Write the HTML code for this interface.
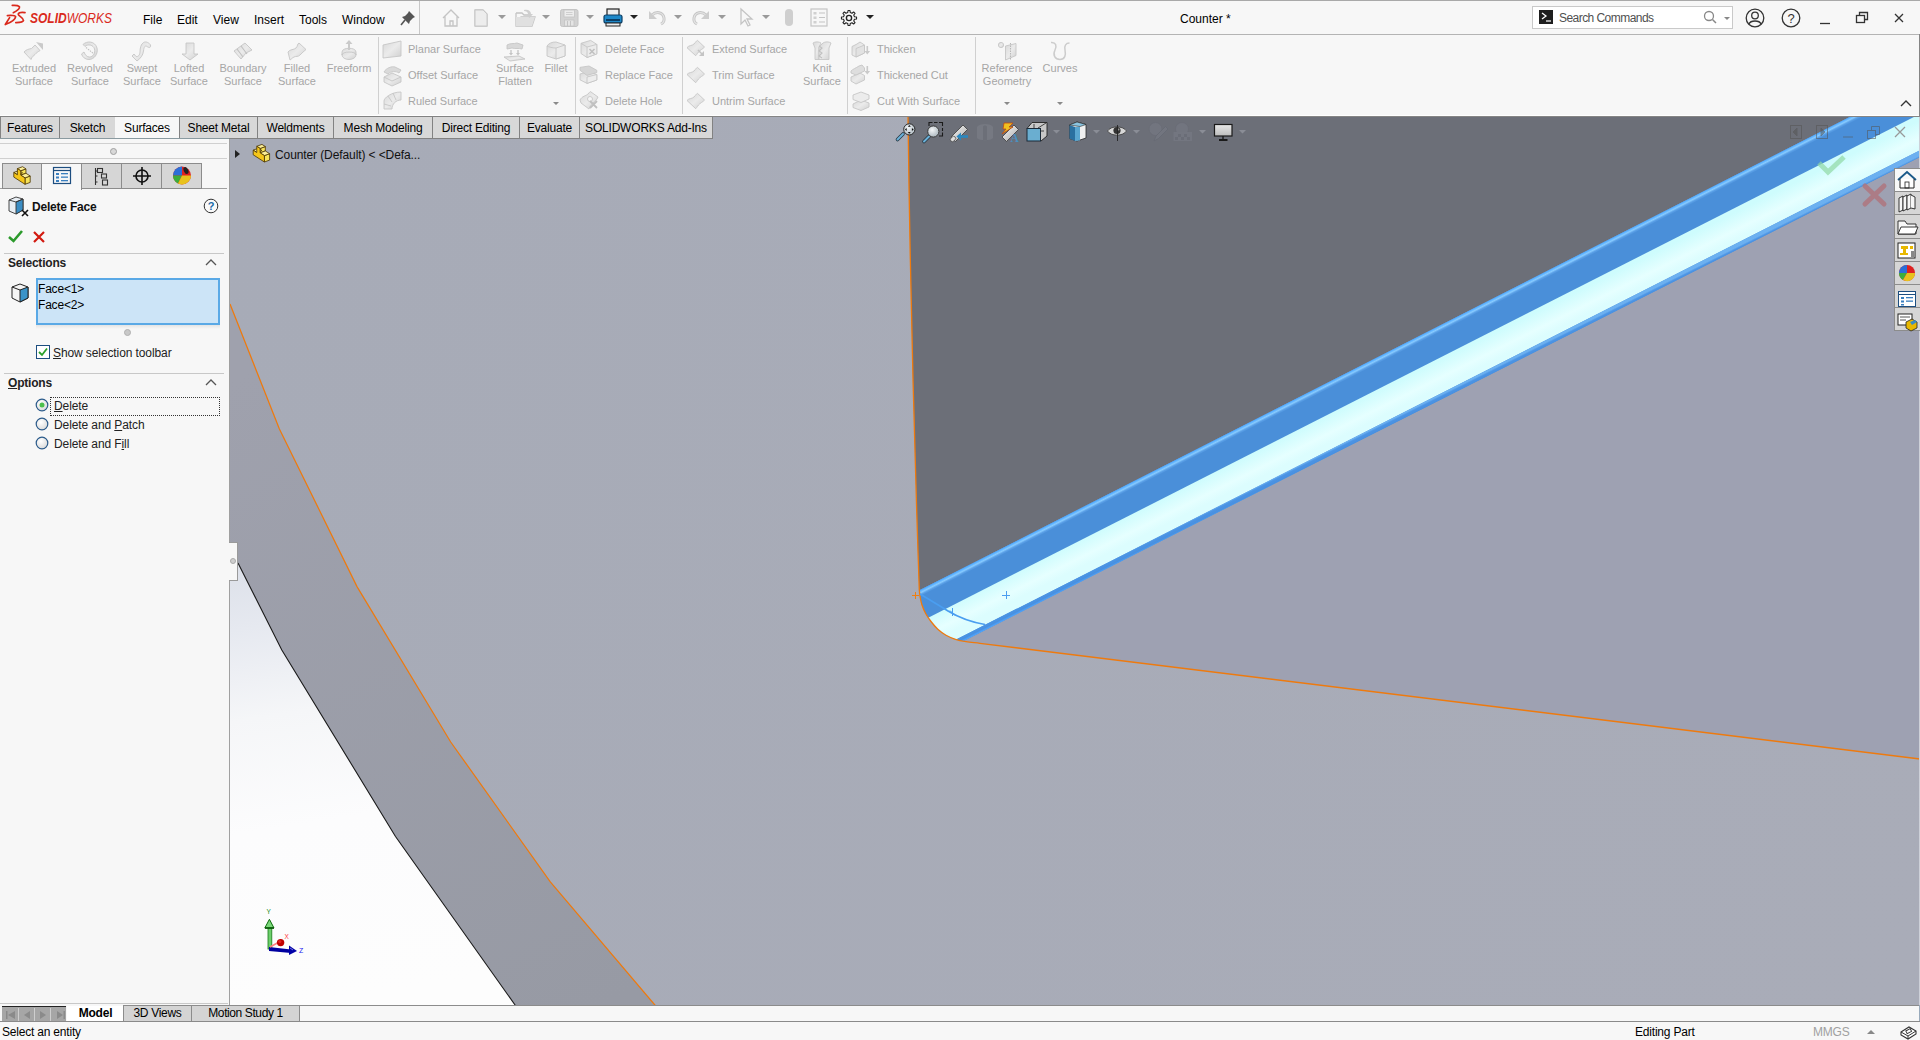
<!DOCTYPE html>
<html><head><meta charset="utf-8">
<style>
*{margin:0;padding:0;box-sizing:border-box}
html,body{width:1920px;height:1040px;overflow:hidden;background:#f7f7f7;font-family:"Liberation Sans",sans-serif;font-size:12px;color:#000}
.a{position:absolute;white-space:nowrap}
#vp{position:absolute;left:230px;top:117px;width:1690px;height:889px;overflow:hidden}
.rt{color:#a6a6a6;font-size:11px;text-align:center;line-height:13px}
.st{color:#a6a6a6;font-size:11px}
.tab{position:absolute;z-index:5;top:116px;height:23px;background:#d8d8d8;border:1px solid #828282;border-right:none;font-size:12px;line-height:23px;letter-spacing:-0.2px;text-align:center;color:#000}
.sep{position:absolute;width:1px;background:#d0d0d0}
</style></head><body>
<!-- top border -->
<div class="a" style="left:0;top:0;width:1920px;height:1px;background:#a9a9a9"></div>
<!-- title bar bottom line -->
<div class="a" style="left:0;top:34px;width:1920px;height:1px;background:#b4b4b4"></div>


<!-- ===== TITLE BAR ===== -->
<svg class="a" style="left:0;top:0" width="116" height="30" viewBox="0 0 116 30">
<g fill="none" stroke="#da291c" stroke-width="1.7" stroke-linecap="round" stroke-linejoin="round">
<path d="M12.3,5.4 C15,5.2 18,5.4 19.4,6.6 C20,8.5 17,11 13.3,12.7"/>
<path d="M7.4,15.6 C11,15.2 15.6,15.4 15.6,16.8 C15.2,19.5 10,22.8 5.3,24.5 L9.6,17.6"/>
<path d="M25,12.6 C22,12.2 18.8,12.6 18.2,14 C18,16 23.5,17.5 23.5,20.5 C23,22.5 19,22.5 15.8,22.6"/>
</g>
<text x="30" y="23" font-family="Liberation Sans" font-weight="bold" font-style="italic" font-size="13.8" fill="#da291c" textLength="82" lengthAdjust="spacingAndGlyphs">SOLID<tspan font-weight="normal">WORKS</tspan></text>
</svg>
<div class="a" style="left:143px;top:13px;font-size:12px">File</div>
<div class="a" style="left:177px;top:13px;font-size:12px">Edit</div>
<div class="a" style="left:213px;top:13px;font-size:12px">View</div>
<div class="a" style="left:254px;top:13px;font-size:12px">Insert</div>
<div class="a" style="left:299px;top:13px;font-size:12px">Tools</div>
<div class="a" style="left:342px;top:13px;font-size:12px">Window</div>
<!-- pin -->
<svg class="a" style="left:400px;top:10px" width="16" height="16" viewBox="0 0 16 16"><path d="M9,1 L15,7 L13,8 L10,11 L9,14 L2,7 L5,6 L8,3 Z" fill="#555"/><path d="M5,10 L1,15" stroke="#555" stroke-width="1.6"/></svg>
<div class="a" style="left:419px;top:1px;width:1px;height:33px;background:#c8c8c8"></div>
<!-- QAT icons -->
<svg class="a" style="left:440px;top:7px" width="450" height="22" viewBox="440 7 450 22">
<g fill="none" stroke="#c4c4c4" stroke-width="1.3">
<path d="M443,18 L451,10 L459,18 M445,16 L445,26 L457,26 L457,16 M450,26 L450,21 L453,21 L453,26"/>
<path d="M475,10 L483,10 L487,14 L487,26 L475,26 Z M483,10 L483,14 L487,14"/>
<path d="M516,13 L516,26 L532,26 L535,17 L521,17 L517,26 M516,13 L522,13 L524,15 L530,15 L530,17"/>



<path d="M741,9 L741,24 L745,20 L748,26 L750,25 L747,19 L752,19 Z"/>
</g>
<rect x="560.5" y="9.5" width="17.5" height="17" rx="2" fill="#d2d2d2" stroke="#c4c4c4"/><rect x="564" y="10" width="10.5" height="7" fill="#ececec" stroke="#c4c4c4" stroke-width="0.8"/><path d="M566,12.5 h6.5 M566,14.5 h6.5" stroke="#c8c8c8" stroke-width="0.8"/><rect x="564.5" y="20" width="9.5" height="6" fill="#e4e4e4" stroke="#c4c4c4" stroke-width="0.8"/><path d="M567.5,21 v5 M570.5,21 v5" stroke="#c4c4c4" stroke-width="1"/>
<path d="M516,17 L535,17 L532,26 L516,26 Z" fill="#e0e0e0"/><path d="M524,10 C528,9 531,11 531,14 L533,14 L529.5,18 L526,14 L528,14 C528,12 526,11 524,11 Z" fill="#cfcfcf"/>
<path d="M475,10 L483,10 L487,14 L487,26 L475,26 Z" fill="#ededed" stroke="#c8c8c8"/>
<g fill="none" stroke="#c6c6c6" stroke-width="3" stroke-linecap="butt"><path d="M652,15 C656,11 663,12 664,18 C664.5,21 663,23 661,24"/><path d="M706,15 C702,11 695,12 694,18 C693.5,21 695,23 697,24"/></g>
<g fill="none" stroke="#e4e4e4" stroke-width="1.2"><path d="M652,15 C656,11 663,12 664,18 C664.5,21 663,23 661,24"/><path d="M706,15 C702,11 695,12 694,18 C693.5,21 695,23 697,24"/></g>
<path d="M649,11 L649,19 L657,19 Z" fill="#cdcdcd"/><path d="M709,11 L709,19 L701,19 Z" fill="#cdcdcd"/>
<g fill="#d0d0d0"><rect x="813.5" y="12" width="3" height="2.5"/><rect x="813.5" y="16.5" width="3" height="2.5"/><rect x="813.5" y="21" width="3" height="2.5"/></g>
<path d="M1186,12" />
<!-- printer -->
<rect x="607" y="9" width="12" height="7" fill="#eee" stroke="#222" stroke-width="1.2"/>
<rect x="604" y="15" width="18" height="8" rx="2" fill="#1e88c8" stroke="#0b3f66" stroke-width="1.2"/>
<rect x="606" y="19" width="14" height="2" fill="#0b3f66"/>
<rect x="606" y="23" width="14" height="3" fill="#eee" stroke="#222" stroke-width="1"/>
<!-- rebuild capsule -->
<rect x="785" y="9" width="8" height="17" rx="4" fill="#cfcfcf"/>
<!-- file props -->
<g fill="none" stroke="#c4c4c4" stroke-width="1.2"><rect x="811" y="9" width="16" height="17"/><path d="M819,13 h6 M819,17.5 h6 M819,22 h6"/></g>
<!-- gear -->
<path d="M854.47,16.78 L856.54,17.01 L856.54,18.99 L854.47,19.22 L853.73,21.00 L855.03,22.63 L853.63,24.03 L852.00,22.73 L850.22,23.47 L849.99,25.54 L848.01,25.54 L847.78,23.47 L846.00,22.73 L844.37,24.03 L842.97,22.63 L844.27,21.00 L843.53,19.22 L841.46,18.99 L841.46,17.01 L843.53,16.78 L844.27,15.00 L842.97,13.37 L844.37,11.97 L846.00,13.27 L847.78,12.53 L848.01,10.46 L849.99,10.46 L850.22,12.53 L852.00,13.27 L853.63,11.97 L855.03,13.37 L853.73,15.00 Z" fill="#fafafa" stroke="#222" stroke-width="1.1" stroke-linejoin="round"/><circle cx="849" cy="18" r="2.6" fill="none" stroke="#222" stroke-width="1.4"/>
<g fill="#9a9a9a"><path d="M498,15 h8 l-4,4z M542,15 h8 l-4,4z M586,15 h8 l-4,4z M674,15 h8 l-4,4z M718,15 h8 l-4,4z M762,15 h8 l-4,4z"/></g>
<g fill="#222"><path d="M630,15 h8 l-4,4z M866,15 h8 l-4,4z"/></g>
</svg>
<div class="a" style="left:1180px;top:12px;font-size:12px">Counter *</div>
<!-- search -->
<div class="a" style="left:1532px;top:6px;width:201px;height:23px;background:#fff;border:1px solid #c9c9c9"></div>
<div class="a" style="left:1539px;top:10px;width:14px;height:14px;background:#1e1e1e"></div>
<svg class="a" style="left:1539px;top:10px" width="14" height="14"><path d="M3,3 L7,6 L3,9" fill="none" stroke="#fff" stroke-width="1.3"/><path d="M7,11 h5" stroke="#fff" stroke-width="1.2"/></svg>
<div class="a" style="left:1559px;top:11px;font-size:12px;color:#505050;letter-spacing:-0.55px">Search Commands</div>
<svg class="a" style="left:1702px;top:9px" width="32" height="18"><circle cx="7" cy="7" r="4.5" fill="none" stroke="#888" stroke-width="1.3"/><path d="M10.5,10.5 L14,14" stroke="#888" stroke-width="1.5"/><path d="M22,8 h6 l-3,3z" fill="#888"/></svg>
<svg class="a" style="left:1744px;top:6px" width="170" height="24">
<g fill="none" stroke="#333" stroke-width="1.3">
<circle cx="11" cy="12" r="8.8"/><circle cx="11" cy="9.5" r="3.3"/><path d="M5,18 C6.5,14 15.5,14 17,18"/>
<circle cx="47" cy="12" r="8.8"/>
<path d="M76,17.5 h10"/>
<rect x="112.5" y="9.5" width="8" height="7"/><path d="M115.5,9.5 V6.5 h8 v7 h-3"/>
<path d="M151,8 L159,16 M159,8 L151,16"/>
</g>
<text x="47" y="16.8" text-anchor="middle" font-family="Liberation Sans" font-size="13" fill="#333">?</text>
</svg>

<!-- ===== RIBBON ===== -->
<div class="a rt" style="left:-6px;top:62px;width:80px">Extruded<br>Surface</div>
<div class="a rt" style="left:50px;top:62px;width:80px">Revolved<br>Surface</div>
<div class="a rt" style="left:102px;top:62px;width:80px">Swept<br>Surface</div>
<div class="a rt" style="left:149px;top:62px;width:80px">Lofted<br>Surface</div>
<div class="a rt" style="left:203px;top:62px;width:80px">Boundary<br>Surface</div>
<div class="a rt" style="left:257px;top:62px;width:80px">Filled<br>Surface</div>
<div class="a rt" style="left:309px;top:62px;width:80px">Freeform</div>
<div class="a rt" style="left:475px;top:62px;width:80px">Surface<br>Flatten</div>
<div class="a rt" style="left:516px;top:62px;width:80px">Fillet</div>
<div class="a rt" style="left:782px;top:62px;width:80px">Knit<br>Surface</div>
<div class="a rt" style="left:967px;top:62px;width:80px">Reference<br>Geometry</div>
<div class="a rt" style="left:1020px;top:62px;width:80px">Curves</div>
<div class="a st" style="left:408px;top:43px;line-height:13px">Planar Surface</div>
<div class="a st" style="left:408px;top:69px;line-height:13px">Offset Surface</div>
<div class="a st" style="left:408px;top:95px;line-height:13px">Ruled Surface</div>
<div class="a st" style="left:605px;top:43px;line-height:13px">Delete Face</div>
<div class="a st" style="left:605px;top:69px;line-height:13px">Replace Face</div>
<div class="a st" style="left:605px;top:95px;line-height:13px">Delete Hole</div>
<div class="a st" style="left:712px;top:43px;line-height:13px">Extend Surface</div>
<div class="a st" style="left:712px;top:69px;line-height:13px">Trim Surface</div>
<div class="a st" style="left:712px;top:95px;line-height:13px">Untrim Surface</div>
<div class="a st" style="left:877px;top:43px;line-height:13px">Thicken</div>
<div class="a st" style="left:877px;top:69px;line-height:13px">Thickened Cut</div>
<div class="a st" style="left:877px;top:95px;line-height:13px">Cut With Surface</div>
<div class="sep" style="left:378px;top:37px;height:77px"></div>
<div class="sep" style="left:575px;top:37px;height:77px"></div>
<div class="sep" style="left:682px;top:37px;height:77px"></div>
<div class="sep" style="left:847px;top:37px;height:77px"></div>
<div class="sep" style="left:975px;top:37px;height:77px"></div>
<svg class="a" style="left:0;top:34px" width="1920" height="82" viewBox="0 34 1920 82">
<g fill="#8a8a8a"><path d="M553,102 h6 l-3,3z M1004,102 h6 l-3,3z M1057,102 h6 l-3,3z"/></g>
<path d="M1901,106 L1906,101 L1911,106" fill="none" stroke="#333" stroke-width="1.4"/>
<!-- ribbon icons (disabled, grey) -->
<defs><linearGradient id="gi" x1="0" y1="0" x2="1" y2="1"><stop offset="0" stop-color="#d8d8d8"/><stop offset="0.5" stop-color="#ebebeb"/><stop offset="1" stop-color="#d0d0d0"/></linearGradient></defs>
<g fill="url(#gi)" stroke="#c6c6c6" stroke-width="0.9" stroke-linejoin="round">
<!-- extruded -->
<path d="M24,52 C26,49.5 29,49 31.5,48.5 L35,45 L40,50.5 C38,52 36.5,52.5 35,54.5 C33.5,56 32,56.5 31,59.5 Z"/>
<!-- revolved -->
<path d="M83,44.5 C87,40.5 95,41 97,48 C98.5,54 94,59.5 89,59.5 C85,59.5 82.5,57 81.5,54 L84,52 C85,55 87,57 89.5,57 C93,57 95.5,53 94.5,49 C93.5,45 88,43.5 85,46.5 Z"/>
<!-- swept -->
<path d="M132,56 L137,61 C141,58 143,55 143.5,51 C144,47 145,45 147,46.5 C149,48 151,48 150.5,45 C149.5,43 146,41 143.5,42.5 C141,44 140,48 140,52 C140,55 138,57 136,56.5 L134,54 Z"/>
<!-- lofted -->
<path d="M186,43 L194,43 L194,54 L198,54 L190,60 L182,54 L186,54 Z"/>
<!-- boundary -->
<path d="M234,51 L245,43 L252,50 L246,53 L241,59 Z"/>
<!-- filled -->
<path d="M288,52 C290,49 294,50 296,48 C298,46 297,44 299,43 L306,49.5 C304,51 302,53 300,55 C298,57 296,56 294,57 C292,58 291,59.5 290,60 Z"/>
<!-- freeform -->
<ellipse cx="349" cy="55" rx="7" ry="4.5"/><path d="M342,52 C342,47 356,47 356,52 L356,55 C356,51 342,51 342,55 Z"/>
<!-- planar -->
<path d="M383,45 L401,41 L401,56 L383,58 Z"/>
<!-- offset -->
<path d="M384,77 L392,73 L401,77 L401,82 L392,86 L384,82 Z"/>
<path d="M384,77 L392,81 L401,77" fill="none"/>
<path d="M384,72 C386,68 392,66 395,67 L401,70 L399,73 C396,71 391,71 388,74 Z" fill="#dadada"/>
<!-- ruled -->
<path d="M384,101 L384,109 L392,109 C392,104 396,100 401,100 L401,92 C391,92 384,98 384,101 Z"/>
<path d="M388,96 L392,102 M393,93 L396,100 M384,104 L391,106" fill="none"/>
<!-- surface flatten -->
<path d="M507,45 C510,43 514,44 517,43 L523,45 L522,49 C519,48 515,49 512,48 L507,49 Z" fill="#d8d8d8"/>
<path d="M504,57 L519,56 L525,59 L510,61 Z"/>
<path d="M511,50 v4 M518,50 v4" fill="none" stroke="#c4c4c4" stroke-width="1.3"/>
<path d="M509,53 h4 l-2,2.5z M516,53 h4 l-2,2.5z" fill="#c4c4c4" stroke="none"/>
<!-- fillet -->
<path d="M547,46 C549,43 552,42 556,42 L565,45 L565,56 L556,59 L547,56 Z"/>
<path d="M556,48 L565,45 L565,56 L556,59 Z" fill="#ececec"/>
<path d="M547,46 C549,47 552,48 556,48" fill="none"/>
<!-- delete face -->
<path d="M581,43.3 L590.6,40.4 L596.8,44.4 L596.8,53.9 L587,57.5 L581,53.5 Z"/>
<path d="M587,47 L596.8,44.4 L596.8,53.9 L587,57.5 Z" fill="#ececec"/>
<path d="M581,43.3 L587,47" fill="none"/>
<!-- replace face -->
<path d="M580,74 L589,71.5 L596.8,74.5 L596.8,80 L587,83.4 L580,79.8 Z"/>
<path d="M587,77 L596.8,74.5 L596.8,80 L587,83.4 Z" fill="#ededed"/>
<path d="M580,67.4 L589,66 L596.8,70.3 L596.8,72.5 L587,75.4 L580,70.3 Z" fill="#d6d6d6"/>
<!-- delete hole -->
<path d="M580,100 C582,96 586,96 588,94 C590,92 590,91 591,92 L598,97 C597,100 595,101 593,103 C591,105 590,106 589,109 L581,103 Z"/>
<circle cx="590" cy="99" r="2.5" fill="#f6f6f6"/>
<!-- extend/trim/untrim -->
<path d="M687,47.7 C689,45 692,46 694,44 C696,42 696,41 697.5,40.4 L704.5,47 C703,49 700,50 698.5,52 C697,54 696.5,55 695.7,55.7 Z"/>
<path d="M687,74.5 C689,72 692,73 694,71 C696,69 696,68 697.5,67.4 L704.5,74 C703,76 700,77 698.5,79 C697,81 696.5,82 695.7,82.7 Z"/>
<path d="M687,100.5 C689,98 692,99 694,97 C696,95 696,94 697.5,93.4 L704.5,100 C703,102 700,103 698.5,105 C697,107 696.5,108 695.7,108.7 Z"/>
<!-- knit -->
<path d="M813,43 C815,41.5 819,41.5 821,43 L819,47 L819,59.5 L815,59.5 L815,48 Z"/>
<path d="M823,43 C825,41.5 829,41.5 831,43 L829,48 L829,59.5 L819,59.5 L819,47 Z"/>
<!-- thicken group -->
<path d="M852,46.5 L857,44 L860,42 L864.5,45 L864.5,53 L856,57 L852,55 Z"/>
<path d="M856,48.5 L864.5,45 L864.5,53 L856,57 Z" fill="#e2e2e2"/>
<path d="M851,77 L860,73 L864.5,75.5 L864.5,80 L856,84 L851,81 Z"/>
<path d="M851,71 C853,69 856,68 859,66 L862,65 L864.5,68 L864.5,71 L856,75 L851,73 Z" fill="#dedede"/>
<path d="M853,104 L861,100 L869,103 L869,107 L861,110.5 L853,107.5 Z"/>
<path d="M853,95 L861,92 L869,95 L869,99 L861,102.5 L853,99.5 Z" fill="#ececec"/>
<!-- ref geom -->
<path d="M1005.5,46 L1016,43.5 L1016,55.5 L1005.5,60 Z"/><circle cx="1001" cy="45" r="2.6"/>
</g>
<g fill="#cacaca"><path d="M36,42 L43,43.5 L43,50 Z"/><path d="M348,50 L350,50 L350,44 L352.5,44 L349,40 L345.5,44 L348,44 Z"/><path d="M866.5,46 h1.6 v5 h2 l-2.8,3.5 l-2.8,-3.5 h2z M866.5,66 h1.6 v5 h2 l-2.8,3.5 l-2.8,-3.5 h2z"/></g>
<path d="M1051,42.5 C1056,42 1057,46 1055,50 C1052.5,55 1055,59.5 1060,59.5 C1065,59.5 1066,55 1065,50 C1064,45.5 1066,43 1069.5,43" fill="none" stroke="#cccccc" stroke-width="1.5"/>
<path d="M698,50 L702,54" stroke="#c4c4c4" stroke-width="1.6"/><path d="M704,51 L704,56 L699,56 Z" fill="#c4c4c4"/>
<g fill="none" stroke="#c0c0c0" stroke-width="1.1"><path d="M86,47.5 L94,54" stroke-dasharray="1.5 1"/><path d="M589.5,49 L594.5,54 M594.5,49 L589.5,54" stroke-width="1.6"/><path d="M590,101 L597,108 M597,101 L590,108" stroke-width="1.8"/><path d="M819,46 L822,48 L819,51 L822,53 L819,56 L822,58" /><path d="M237,49 L243,57 M241,46 L247,54"/><path d="M1010.5,43 V60" stroke="#b8b8b8" stroke-dasharray="1.5 1"/></g>
</svg>

<div class="a" style="left:0;top:115px;width:1920px;height:1px;background:#ffffff"></div>
<div class="a" style="left:0;top:116px;width:1920px;height:1px;background:#858585"></div>
<div class="a" style="left:1919px;top:34px;width:1px;height:83px;background:#858585"></div>
<div class="a" style="left:1919px;top:117px;width:1px;height:888px;background:#cdd0d8;z-index:3"></div>
<!-- ===== COMMAND MANAGER TABS ===== -->
<div class="tab" style="left:0px;width:60px;border-right:1px solid #828282">Features</div>
<div class="tab" style="left:59px;width:57px;border-right:1px solid #828282">Sketch</div>
<div class="a" style="left:115px;top:117px;width:64px;height:22px;z-index:5;background:#f7f7f7;text-align:center;line-height:22px;font-size:12px;letter-spacing:-0.2px">Surfaces</div>
<div class="tab" style="left:179px;width:79px;border-right:1px solid #828282">Sheet Metal</div>
<div class="tab" style="left:257px;width:77px;border-right:1px solid #828282">Weldments</div>
<div class="tab" style="left:333px;width:100px;border-right:1px solid #828282">Mesh Modeling</div>
<div class="tab" style="left:432px;width:88px;border-right:1px solid #828282">Direct Editing</div>
<div class="tab" style="left:519px;width:61px;border-right:1px solid #828282">Evaluate</div>
<div class="tab" style="left:579px;width:134px;border-right:1px solid #828282">SOLIDWORKS Add-Ins</div>
<div class="a" style="left:0;top:138px;width:229px;height:1px;background:#8a9aa0;z-index:5"></div>

<!-- ===== LEFT PANEL ===== -->
<div class="a" style="left:229px;top:139px;width:1px;height:866px;background:#a0a0a0"></div>
<div class="a" style="left:0;top:143px;width:227px;height:1px;background:#d0d0d0"></div>
<div class="a" style="left:110px;top:148px;width:7px;height:7px;border-radius:50%;border:1px solid #a0a0a0;background:#d8d8d8"></div>
<div class="a" style="left:0;top:158px;width:227px;height:1px;background:#d0d0d0"></div>
<!-- PM tabs -->
<div class="a" style="left:0;top:188px;width:227px;height:1px;background:#a0a0a0"></div>
<div class="a" style="left:2px;top:163px;width:40px;height:26px;background:#d6d6d6;border:1px solid #8c8c8c"></div>
<div class="a" style="left:41px;top:163px;width:41px;height:27px;background:#f7f7f7;border:1px solid #8c8c8c;border-bottom:none"></div>
<div class="a" style="left:81px;top:163px;width:41px;height:26px;background:#d6d6d6;border:1px solid #8c8c8c"></div>
<div class="a" style="left:121px;top:163px;width:41px;height:26px;background:#d6d6d6;border:1px solid #8c8c8c"></div>
<div class="a" style="left:161px;top:163px;width:41px;height:26px;background:#d6d6d6;border:1px solid #8c8c8c"></div>
<svg class="a" style="left:0;top:160px" width="230" height="30" viewBox="0 160 230 30">
<!-- part icon -->
<g stroke="#4a3400" stroke-width="0.8" stroke-linejoin="round"><path d="M25.00,184.30 L30.20,182.40 L30.20,176.00 L25.00,177.90 Z" fill="#f7e35a"/><path d="M20.74,175.16 L25.94,173.26 L25.94,168.86 L20.74,170.76 Z" fill="#f7e35a"/><path d="M13.80,172.45 L17.38,174.75 L22.58,172.85 L19.00,170.55 Z" fill="#fbee98"/><path d="M17.38,168.60 L20.74,170.76 L25.94,168.86 L22.58,166.70 Z" fill="#fbee98"/><path d="M20.74,175.16 L25.00,177.90 L30.20,176.00 L25.94,173.26 Z" fill="#fbee98"/><path d="M13.80,177.10 L25.00,184.30 L25.00,177.90 L20.74,175.16 L20.74,170.76 L17.38,168.60 L17.38,174.75 L13.80,172.45 Z" fill="#f5c61a"/></g>
<!-- property manager icon -->
<g fill="none" stroke="#1d4e80" stroke-width="1.2"><rect x="53.5" y="167.5" width="17" height="16"/><path d="M53.5,170.5 h17"/></g>
<g fill="#3a7fbf"><rect x="56" y="173" width="3" height="2"/><rect x="56" y="176.5" width="3" height="2"/><rect x="56" y="180" width="3" height="2"/><rect x="61" y="173" width="7" height="1.3"/><rect x="61" y="176.5" width="7" height="1.3"/><rect x="61" y="180" width="7" height="1.3"/></g>
<!-- config manager icon -->
<g fill="none" stroke="#333" stroke-width="1.1"><path d="M95.5,168 V185 M95.5,171 h2 M95.5,182 h2 M95.5,176 h2"/><rect x="97.5" y="168.5" width="5" height="4"/><rect x="101.5" y="174" width="5" height="4"/><rect x="102.5" y="180" width="5" height="5"/></g>
<!-- dimxpert icon -->
<g fill="none" stroke="#111" stroke-width="1.6"><circle cx="142" cy="176" r="6"/><path d="M142,167 V185 M133,176 H151"/></g>
<!-- appearance ball -->
<circle cx="182" cy="175.5" r="9" fill="#d22"/>
<path d="M182,175.5 L173,175.5 A9,9 0 0 1 182,166.5 Z" fill="#2c6fd8"/>
<path d="M182,175.5 L173,175.5 A9,9 0 0 0 178,183.5 Z" fill="#3cae3c"/>
<path d="M182,175.5 L191,175.5 A9,9 0 0 1 178,183.5 Z" fill="#e8c21c"/>
<ellipse cx="186" cy="170.5" rx="2.2" ry="3.6" fill="#222" transform="rotate(-25 186 170.5)"/>
</svg>
<!-- Delete Face header -->
<svg class="a" style="left:6px;top:195px" width="24" height="22" viewBox="0 0 24 22">
<path d="M3,5 L10,2 L17,4 L17,15 L10,19 L3,16 Z" fill="#e8eef4" stroke="#333" stroke-width="0.9"/>
<path d="M10,7 L17,4 L17,15 L10,19 Z" fill="#3b8dc4" stroke="#333" stroke-width="0.9"/>
<path d="M3,5 L10,7 L17,4" fill="none" stroke="#333" stroke-width="0.9"/>
<path d="M16,15 L22,21 M22,15 L16,21" stroke="#111" stroke-width="1.6"/>
</svg>
<div class="a" style="left:32px;top:200px;font-size:12px;font-weight:bold;letter-spacing:-0.2px;color:#111">Delete Face</div>
<svg class="a" style="left:202px;top:197px" width="18" height="18"><circle cx="9" cy="9" r="6.8" fill="#fafafa" stroke="#333" stroke-width="1"/><text x="9" y="13.2" text-anchor="middle" font-family="Liberation Sans" font-weight="bold" font-size="11" fill="#1a6aa8">?</text></svg>
<svg class="a" style="left:6px;top:227px" width="44" height="18">
<path d="M3,10 L7.5,14 L16,4" fill="none" stroke="#2c9a2c" stroke-width="2.6"/>
<path d="M28,5 L38,15 M38,5 L28,15" stroke="#d21a10" stroke-width="2.2"/>
</svg>
<!-- Selections -->
<div class="a" style="left:4px;top:253px;width:220px;height:1px;background:#c8c8c8"></div>
<div class="a" style="left:8px;top:256px;font-size:12px;font-weight:bold;color:#222;letter-spacing:-0.2px">Selections</div>
<svg class="a" style="left:204px;top:257px" width="14" height="10"><path d="M2,8 L7,3 L12,8" fill="none" stroke="#555" stroke-width="1.3"/></svg>
<svg class="a" style="left:10px;top:282px" width="20" height="22" viewBox="0 0 20 22">
<path d="M2,5 L10,2 L18,5 L18,16 L10,20 L2,16 Z" fill="#f4f4f4" stroke="#222" stroke-width="1"/>
<path d="M10,8 L18,5 L18,16 L10,20 Z" fill="#3a93c8" stroke="#222" stroke-width="1"/>
<path d="M2,5 L10,8" fill="none" stroke="#222" stroke-width="1"/>
</svg>
<div class="a" style="left:36px;top:278px;width:184px;height:47px;background:#cce4f7;border:2px solid #5aa9e6"></div>
<div class="a" style="left:38px;top:281px;font-size:12px;line-height:16px;letter-spacing:-0.2px">Face&lt;1&gt;<br>Face&lt;2&gt;</div>
<div class="a" style="left:36px;top:325px;width:184px;height:4px;background:linear-gradient(#e4e4e4,#f7f7f7)"></div>
<div class="a" style="left:124px;top:329px;width:7px;height:7px;border-radius:50%;background:#c8c8c8;border:1px solid #b0b0b0"></div>
<div class="a" style="left:36px;top:345px;width:14px;height:14px;border:1px solid #1d4e80;background:#fff"></div>
<svg class="a" style="left:36px;top:345px" width="14" height="14"><path d="M3,7 L6,10 L11,3.5" fill="none" stroke="#2aa02a" stroke-width="1.8"/></svg>
<div class="a" style="left:53px;top:346px;font-size:12px;color:#222;letter-spacing:-0.1px"><u>S</u>how selection toolbar</div>
<!-- Options -->
<div class="a" style="left:4px;top:373px;width:220px;height:1px;background:#c8c8c8"></div>
<div class="a" style="left:8px;top:376px;font-size:12px;font-weight:bold;color:#222;letter-spacing:-0.2px"><u>O</u>ptions</div>
<svg class="a" style="left:204px;top:377px" width="14" height="10"><path d="M2,8 L7,3 L12,8" fill="none" stroke="#555" stroke-width="1.3"/></svg>
<svg class="a" style="left:34px;top:396px" width="18" height="56">
<defs><radialGradient id="rg" cx="0.4" cy="0.35" r="0.7"><stop offset="0" stop-color="#fff"/><stop offset="1" stop-color="#d8d8d8"/></radialGradient></defs>
<circle cx="8" cy="9" r="5.8" fill="url(#rg)" stroke="#2a5a8a" stroke-width="1.2"/>
<circle cx="8" cy="9" r="2.5" fill="#4cbf4c"/>
<circle cx="8" cy="28" r="5.8" fill="url(#rg)" stroke="#2a5a8a" stroke-width="1.2"/>
<circle cx="8" cy="47" r="5.8" fill="url(#rg)" stroke="#2a5a8a" stroke-width="1.2"/>
</svg>
<div class="a" style="left:50px;top:397px;width:170px;height:19px;border:1px dotted #333"></div>
<div class="a" style="left:54px;top:399px;font-size:12px;color:#222;letter-spacing:-0.1px"><u>D</u>elete</div>
<div class="a" style="left:54px;top:418px;font-size:12px;color:#222;letter-spacing:-0.1px">Delete and <u>P</u>atch</div>
<div class="a" style="left:54px;top:437px;font-size:12px;color:#222;letter-spacing:-0.1px">Delete and F<u>i</u>ll</div>
<!-- panel bottom -->
<div class="a" style="left:0;top:1003px;width:228px;height:1px;background:#c8c8c8"></div>

<!-- VIEWPORT -->
<div id="vp">
<svg width="1690" height="889" viewBox="230 117 1690 889">
<defs>
<linearGradient id="gBg" gradientUnits="userSpaceOnUse" x1="230" y1="117" x2="1920" y2="1006">
<stop offset="0" stop-color="#a7abb7"/><stop offset="1" stop-color="#a9acb8"/>
</linearGradient>
<linearGradient id="gWhite" gradientUnits="userSpaceOnUse" x1="230" y1="563" x2="300" y2="1006">
<stop offset="0" stop-color="#dce0e9"/><stop offset="0.15" stop-color="#e6e9f0"/><stop offset="0.35" stop-color="#f5f6f8"/><stop offset="0.6" stop-color="#fcfcfd"/><stop offset="1" stop-color="#fdfdfd"/>
</linearGradient>
<linearGradient id="gTopRim" gradientUnits="userSpaceOnUse" x1="1100" y1="498.4" x2="1102.8" y2="503.9">
<stop offset="0" stop-color="#4aa6ff"/><stop offset="0.2" stop-color="#64b6ff"/><stop offset="0.42" stop-color="#88cbff"/><stop offset="0.7" stop-color="#5a9fe6"/><stop offset="1" stop-color="#4a90da"/>
</linearGradient>
<linearGradient id="gBotRim" gradientUnits="userSpaceOnUse" x1="1160" y1="535.3" x2="1162.8" y2="540.9">
<stop offset="0" stop-color="#6cb0f0"/><stop offset="0.25" stop-color="#4c94e4"/><stop offset="0.7" stop-color="#4890e0"/><stop offset="1" stop-color="#4ea4fc"/>
</linearGradient>
<linearGradient id="gCyan" gradientUnits="userSpaceOnUse" x1="1100" y1="530" x2="1111" y2="552">
<stop offset="0" stop-color="#cefcfd"/><stop offset="0.65" stop-color="#e6ffff"/><stop offset="1" stop-color="#dcfdfe"/>
</linearGradient>
<linearGradient id="gBand" gradientUnits="userSpaceOnUse" x1="300" y1="350" x2="600" y2="1006"><stop offset="0" stop-color="#9fa1ad"/><stop offset="1" stop-color="#979aa4"/></linearGradient>
<clipPath id="cFace"><path d="M908,117 Q911,350 919.3,590 C919.55,592.67 919.55,593.50 920,596 C920.45,598.50 921.03,602.03 922,605 C922.97,607.97 924.30,611.05 925.8,613.8 C927.30,616.55 929.00,618.93 931,621.5 C933.00,624.07 935.30,626.92 937.8,629.2 C940.30,631.48 943.05,633.52 946,635.2 C948.95,636.88 952.17,638.23 955.5,639.3 C958.83,640.37 961.92,640.93 966,641.6 C970.08,642.27 974.33,642.60 980,643.3 L1920,759 L1920,117 Z"/></clipPath>
</defs>
<rect x="230" y="117" width="1690" height="889" fill="url(#gBg)"/>
<!-- left darker band -->
<path d="M230,304 L279.4,429 L357,586.6 L450.7,742 L550.3,881.9 L655.7,1006 L230,1006 Z" fill="url(#gBand)"/>
<!-- white region -->
<path d="M230,563 L238,563 L281.8,650 L395.5,836.5 L515.8,1006 L230,1006 Z" fill="url(#gWhite)"/>
<path d="M238,563 L281.8,650 L395.5,836.5 L515.8,1006" fill="none" stroke="#1a1a1a" stroke-width="1.1"/>
<path d="M230,304 L279.4,429 L357,586.6 L450.7,742 L550.3,881.9 L655.7,1006" fill="none" stroke="#ee7a0e" stroke-width="1.25"/>
<g clip-path="url(#cFace)">
<rect x="850" y="117" width="1070" height="889" fill="#9ea1b2"/>
<!-- dark face: above L_top -->
<path d="M850,117 L1920,117 L1920,81.25 L850,625.6 Z" fill="#6c6f78"/>
<!-- strip base blue L_top..L_ob -->
<path d="M850,625.6 L1920,81.25 L1920,157.1 L850,698.5 Z" fill="#4a8fd9"/>
<!-- top rim -->
<path d="M850,625.6 L1920,81.25 L1920,87.5 L850,631.9 Z" fill="url(#gTopRim)"/>
<!-- cyan L_bc..L_cb -->
<path d="M850,657.4 L1920,113.9 L1920,150.2 L850,693.4 Z" fill="url(#gCyan)"/>
<!-- bottom rim L_cb..L_ob -->
<path d="M850,693.4 L1920,150.2 L1920,157.1 L850,698.5 Z" fill="url(#gBotRim)"/>
</g>
<!-- orange outline right -->
<path d="M908,117 Q911,350 919.3,590 C919.55,592.67 919.55,593.50 920,596 C920.45,598.50 921.03,602.03 922,605 C922.97,607.97 924.30,611.05 925.8,613.8 C927.30,616.55 929.00,618.93 931,621.5 C933.00,624.07 935.30,626.92 937.8,629.2 C940.30,631.48 943.05,633.52 946,635.2 C948.95,636.88 952.17,638.23 955.5,639.3 C958.83,640.37 961.92,640.93 966,641.6 C970.08,642.27 974.33,642.60 980,643.3 L1920,759" fill="none" stroke="#ee7a0e" stroke-width="1.3"/>
</svg>
</div>

<!-- ===== VIEWPORT OVERLAYS ===== -->
<svg class="a" style="left:230px;top:117px" width="1690" height="889" viewBox="230 117 1690 889">
<!-- tree -->
<path d="M235,150 L240,154 L235,158 Z" fill="#222"/>
<g stroke="#4a3400" stroke-width="0.8" stroke-linejoin="round"><path d="M264.40,162.00 L269.60,160.10 L269.60,153.70 L264.40,155.60 Z" fill="#f7e35a"/><path d="M260.14,152.86 L265.34,150.96 L265.34,146.56 L260.14,148.46 Z" fill="#f7e35a"/><path d="M253.20,150.15 L256.78,152.45 L261.98,150.55 L258.40,148.25 Z" fill="#fbee98"/><path d="M256.78,146.30 L260.14,148.46 L265.34,146.56 L261.98,144.40 Z" fill="#fbee98"/><path d="M260.14,152.86 L264.40,155.60 L269.60,153.70 L265.34,150.96 Z" fill="#fbee98"/><path d="M253.20,154.80 L264.40,162.00 L264.40,155.60 L260.14,152.86 L260.14,148.46 L256.78,146.30 L256.78,152.45 L253.20,150.15 Z" fill="#f5c61a"/></g>
<!-- markers -->
<path d="M912,595.5 h7 M915.5,592 v7" stroke="#f07f10" stroke-width="1"/>
<path d="M1002,595.5 h8 M1006.5,591 v8" stroke="#4a9ef0" stroke-width="1"/>
<path d="M920,594 C930,600 940,606 948,611 C958,617 970,622 985,624.5" fill="none" stroke="#4a9ef0" stroke-width="1.6"/>
<path d="M950,610.5 L955,615.5 M952.5,608 v8" stroke="#4a9ef0" stroke-width="1"/>
<!-- heads-up toolbar -->
<defs>
<radialGradient id="gLens" cx="0.4" cy="0.35" r="0.7"><stop offset="0" stop-color="#f4f6f8"/><stop offset="1" stop-color="#a8b4bc"/></radialGradient>
<linearGradient id="gTel" x1="0" y1="0" x2="1" y2="1"><stop offset="0" stop-color="#fafafa"/><stop offset="1" stop-color="#a8a8a8"/></linearGradient>
<linearGradient id="gMon" x1="0" y1="0" x2="0" y2="1"><stop offset="0" stop-color="#e8e8e8"/><stop offset="1" stop-color="#bcbcbc"/></linearGradient>
</defs>
<g>
<!-- zoom to fit -->
<path d="M903,134 L897.5,139.5" stroke="#2a3a44" stroke-width="3.6" stroke-linecap="round"/><path d="M903,134 L897.5,139.5" stroke="#6ab0d8" stroke-width="2" stroke-linecap="round"/>
<circle cx="909.3" cy="129.4" r="5.6" fill="url(#gLens)" stroke="#2a2a2a" stroke-width="1"/>
<path d="M909.3,125 l-1.5,1.8 h3z M909.3,133.8 l-1.5,-1.8 h3z M904.9,129.4 l1.8,-1.5 v3z M913.7,129.4 l-1.8,-1.5 v3z" fill="#111"/>
<!-- zoom area -->
<path d="M929,126 V122.5 H932.5 M939,122.5 H942.5 V126 M942.5,132.5 V136 H939" fill="none" stroke="#1a1a1a" stroke-width="1.1"/>
<path d="M934,122.5 h3.5 M942.5,128 v3" stroke="#1a1a1a" stroke-width="1.1"/>
<path d="M929,136.5 L924,141.5" stroke="#2a3a44" stroke-width="3.6" stroke-linecap="round"/><path d="M929,136.5 L924,141.5" stroke="#6ab0d8" stroke-width="2" stroke-linecap="round"/>
<circle cx="933.3" cy="131.5" r="5.6" fill="url(#gLens)" stroke="#3a3a3a" stroke-width="1"/>
<!-- previous view -->
<path d="M951,137 L963,125 L967.5,129.5 L955.5,141.5 Z" fill="url(#gTel)" stroke="#3a3a3a" stroke-width="0.8"/>
<ellipse cx="953" cy="139" rx="2.2" ry="3" transform="rotate(45 953 139)" fill="#ddd" stroke="#444" stroke-width="0.7"/>
<path d="M958.5,136.5 h9.5" stroke="#2a88c0" stroke-width="2.6"/><path d="M961,132.5 L956.5,136.5 L961,140.5 Z" fill="#2a88c0"/>
<!-- section (disabled) -->
<path d="M977,127 C979,123 991,123 993,127 L993,138 C991,141 979,141 977,138 Z" fill="#767982"/>
<path d="M983,127 C983,125 987,125 987,127 L987,140 L983,140 Z" fill="#6c6f78"/>
<!-- dynamic annotation -->
<path d="M1002,137 L1014,125 L1018.5,129.5 L1006.5,141.5 Z" fill="url(#gTel)" stroke="#3a3a3a" stroke-width="0.8"/>
<path d="M1004,123 L1013,123 L1009,127 L1013,127 L1002,134 L1006,129 L1003,129 Z" fill="#f0c020" stroke="#c04a10" stroke-width="0.8"/>
<text x="1010.5" y="141.5" font-family="Liberation Serif" font-size="11.5" font-weight="bold" fill="#4a90c0">A</text>
<!-- view orientation -->
<path d="M1027,128.5 L1032,122.5 L1047,122.5 L1047,136 L1041,141 Z" fill="#c8c8c8" stroke="#222" stroke-width="0.9"/>
<path d="M1034,124 v4 M1044,131 h-3 M1038,128 L1046,123" stroke="#222" stroke-width="0.8"/>
<rect x="1027" y="128.5" width="13.5" height="12.5" fill="#6aaed0" stroke="#1a2a38" stroke-width="1"/>
<path d="M1053,130 h7 l-3.5,3.5z M1093,130 h7 l-3.5,3.5z M1133,130 h7 l-3.5,3.5z M1199,130 h7 l-3.5,3.5z M1239,130 h7 l-3.5,3.5z" fill="#8a8d96"/>
<!-- display style -->
<path d="M1069.5,125 L1077,122 L1086,124.5 L1086,138 L1077,141 L1069.5,138.5 Z" fill="#f0f0f0" stroke="#2a2a2a" stroke-width="0.8"/>
<path d="M1069.5,125 L1075,127 L1075,141 L1069.5,138.5 Z" fill="#2a70a0"/>
<path d="M1075,127 L1080,126.5 L1080,140.5 L1075,141 Z" fill="#5aa6d0"/>
<path d="M1069.5,125 L1077,122 L1086,124.5 L1080,126.5 Z" fill="#8ac4e0" stroke="#2a2a2a" stroke-width="0.6"/>
<!-- hide/show -->
<path d="M1107.5,131 C1111,125.5 1123,125.5 1126.5,131 C1123,136.5 1111,136.5 1107.5,131 Z" fill="#d8d8d8" stroke="#444" stroke-width="0.9"/>
<circle cx="1117" cy="130.5" r="3.6" fill="#333"/><circle cx="1118.5" cy="129.5" r="1" fill="#999"/>
<path d="M1117.5,125 V141" stroke="#222" stroke-width="0.9"/>
<!-- edit appearance (disabled) -->
<circle cx="1155.5" cy="129" r="6.5" fill="#72757f" stroke="#696c76" stroke-width="0.8"/>
<path d="M1154,141 L1156,136 L1165.5,126.5 L1168,129 L1158.5,138.5 Z" fill="#72757f" stroke="#666973" stroke-width="0.8"/>
<!-- apply scene (disabled) -->
<circle cx="1182" cy="129" r="6.5" fill="#72757f" stroke="#696c76" stroke-width="0.8"/>
<rect x="1173.5" y="132" width="18.5" height="9" fill="#737680"/>
<path d="M1175,137 h3 v3 h-3z M1181,137 h3 v3 h-3z M1187,137 h3 v3 h-3z M1178,134 h3 v3 h-3z M1184,134 h3 v3 h-3z" fill="#6a6d77"/>
<!-- view settings -->
<rect x="1214.5" y="124.5" width="17.5" height="11.5" fill="url(#gMon)" stroke="#1a1a1a" stroke-width="1.2"/>
<path d="M1223,136 v3" stroke="#1a1a1a" stroke-width="1.4"/><rect x="1219" y="139" width="8.5" height="2" fill="#1a1a1a"/>
</g>
<!-- doc window controls -->
<g fill="none" stroke="#555" stroke-width="1" opacity="0.55">
<rect x="1790.5" y="125.5" width="11" height="13"/><path d="M1797,128 L1793,132 L1797,136 Z" fill="#555"/>
<rect x="1816.5" y="125.5" width="11" height="13"/><path d="M1821,128 L1825,132 L1821,136 Z" fill="#555"/>
<path d="M1843,137 h10"/>
<rect x="1867.5" y="130.5" width="8" height="8"/><path d="M1871.5,130.5 v-4 h8 v8 h-4"/>
</g>
<path d="M1895,127 L1905,137 M1905,127 L1895,137" stroke="#999" stroke-width="1.3"/>
<!-- faded confirmation corner -->
<path d="M1819,163 L1828,172 L1844,157" fill="none" stroke="#90d8a4" stroke-width="5" opacity="0.7"/>
<path d="M1865,186 L1884,204 M1884,186 L1865,204" stroke="#b0747c" stroke-width="5" opacity="0.8" stroke-linecap="round"/>
<!-- triad -->
<rect x="268" y="928" width="3.8" height="21" fill="#6ccf6c" stroke="#1a7a1a" stroke-width="0.8"/>
<path d="M264.8,928 L274,928 L269.4,919.3 Z" fill="#7ad87a" stroke="#0a6a0a" stroke-width="1"/>
<path d="M265,928 h9" stroke="#0a5a0a" stroke-width="1.6"/>
<path d="M269,947 L291,949.5 L291,953 L269,951 Z" fill="#0000a0"/>
<path d="M289,945.5 L297,951 L289,955 Z" fill="#0000a8"/>
<path d="M290,948 L293,950" stroke="#8080e0" stroke-width="0.9"/>
<path d="M270,947 L281,941" stroke="#ff8080" stroke-width="1.6"/>
<circle cx="280.6" cy="942.6" r="3.7" fill="#c00000"/>
<circle cx="279.8" cy="941.6" r="1.6" fill="#e02020"/>
<text x="266.5" y="914" font-family="Liberation Sans" font-size="6.5" fill="#1a8a1a">Y</text>
<text x="284.5" y="939" font-family="Liberation Sans" font-size="6.5" fill="#ff3a3a">X</text>
<text x="299" y="952.5" font-family="Liberation Sans" font-size="7" fill="#2020f0">Z</text>
</svg>
<div class="a" style="left:275px;top:148px;font-size:12px;color:#111;letter-spacing:-0.1px">Counter (Default) &lt; &lt;Defa...</div>
<!-- collapse handle -->
<div class="a" style="left:229px;top:542px;width:9px;height:39px;background:#f7f7f7;border:1px solid #9a9a9a;border-left:none"></div>
<div class="a" style="left:230px;top:558px;width:6px;height:6px;border-radius:50%;background:#cfcfcf;border:1px solid #aaa"></div>
<!-- task pane -->
<div class="a" style="left:1894px;top:168px;width:26px;height:163px;background:#d6d6d6;border:1px solid #8c8c8c;border-right:none;z-index:4"></div>
<div class="a" style="left:1895px;top:169px;width:25px;height:22px;background:#f8f8f8;z-index:4"></div>
<svg class="a" style="left:1894px;top:168px;z-index:4" width="26" height="164" viewBox="1894 168 26 164">
<g stroke="#8c8c8c" stroke-width="1"><path d="M1894,191.5 h26 M1894,214.5 h26 M1894,238.5 h26 M1894,261.5 h26 M1894,284.5 h26 M1894,307.5 h26"/></g>
<path d="M1898,180 L1907,172 L1916,180" fill="none" stroke="#1c5a8a" stroke-width="1.8"/><path d="M1900,179 V188 H1914 V179" fill="#fff" stroke="#222" stroke-width="1"/><rect x="1905" y="182" width="4" height="6" fill="none" stroke="#222" stroke-width="0.8"/>
<g fill="#f7f7f7" stroke="#222" stroke-width="0.9"><path d="M1899,198 L1903,196 L1903,210 L1899,212 Z"/><path d="M1903,197 L1907,195 L1907,209 L1903,211 Z"/><path d="M1907,196 L1911,194 L1911,208 L1907,210 Z"/><path d="M1911,195 L1915,197 L1915,209 L1911,208"/></g>
<path d="M1898,221 L1905,221 L1907,224 L1916,224 L1916,234 L1898,234 Z" fill="#f7f7f7" stroke="#222" stroke-width="0.9"/><path d="M1901,227 L1918,227 L1915,234 L1898,234 Z" fill="#fff" stroke="#222" stroke-width="0.9"/>
<rect x="1898" y="243" width="17" height="15" fill="#fff" stroke="#222" stroke-width="1"/><rect x="1901" y="246" width="7" height="3" fill="#e8b800"/><rect x="1903" y="249" width="3" height="4" fill="#e8b800"/><rect x="1900" y="253" width="8" height="2" fill="#e8b800"/><rect x="1910" y="246" width="3" height="3" fill="#e8b800"/><rect x="1911" y="251" width="3" height="6" fill="#888"/>
<circle cx="1907" cy="273" r="8" fill="#d22"/><path d="M1907,273 L1899,273 A8,8 0 0 1 1907,265 Z" fill="#2c6fd8"/><path d="M1907,273 L1899,273 A8,8 0 0 0 1903,280 Z" fill="#3cae3c"/><path d="M1907,273 L1915,273 A8,8 0 0 1 1903,280 Z" fill="#e8c21c"/>
<rect x="1898.5" y="291.5" width="17" height="15" fill="#fff" stroke="#1d4e80" stroke-width="1"/><path d="M1898.5,294.5 h17" stroke="#1d4e80"/><g fill="#3a7fbf"><rect x="1901" y="297" width="3" height="2"/><rect x="1901" y="300.5" width="3" height="2"/><rect x="1901" y="304" width="3" height="1.5"/><rect x="1906" y="297" width="7" height="1.3"/><rect x="1906" y="300.5" width="7" height="1.3"/></g>
<rect x="1898" y="314" width="14" height="11" fill="#fff" stroke="#222" stroke-width="1"/><path d="M1900,317 h10 M1900,320 h6" stroke="#555"/><path d="M1906,322 L1912,319 L1917,322 L1917,328 L1911,331 L1906,328 Z" fill="#e8b800" stroke="#222" stroke-width="0.8"/><path d="M1910,322 L1915,320 L1917,322 L1912,325 Z" fill="#3a8cc4"/>
</svg>
<!-- ===== BOTTOM TABS & STATUS ===== -->
<div class="a" style="left:0;top:1005px;width:1920px;height:16px;background:#f7f7f7"></div>
<div class="a" style="left:229px;top:1005px;width:1691px;height:1px;background:#8c8c8c"></div>
<div class="a" style="left:2px;top:1006px;width:64px;height:1px;background:#222"></div>
<div class="a" style="left:2px;top:1007px;width:64px;height:14px;background:#a6a6a6"></div>
<svg class="a" style="left:2px;top:1006px" width="64" height="16">
<g stroke="#cfcfcf" stroke-width="1"><path d="M16.5,2 V15 M32.5,2 V15 M48.5,2 V15"/></g>
<g fill="#8a8a8a"><rect x="4" y="5" width="1.5" height="8"/><path d="M13,5 L6,9 L13,13Z"/><path d="M28,5 L22,9 L28,13Z"/><path d="M38,5 L44,9 L38,13Z"/><path d="M55,5 L61,9 L55,13Z"/><rect x="61.5" y="5" width="1.5" height="8"/></g>
</svg>
<div class="a" style="left:67px;top:1006px;width:57px;height:15px;background:#fff;font-weight:bold;font-size:12px;text-align:center;line-height:15px;letter-spacing:-0.2px">Model</div>
<div class="a" style="left:123px;top:1005px;width:69px;height:17px;background:#d4d4d4;border:1px solid #8c8c8c;font-size:12px;text-align:center;line-height:15px;letter-spacing:-0.3px">3D Views</div>
<div class="a" style="left:191px;top:1005px;width:109px;height:17px;background:#d4d4d4;border:1px solid #8c8c8c;font-size:12px;text-align:center;line-height:15px;letter-spacing:-0.4px">Motion Study 1</div>
<div class="a" style="left:0;top:1021px;width:1920px;height:1px;background:#8a8a8a"></div>
<div class="a" style="left:1919px;top:1005px;width:1px;height:16px;background:#9ab"></div>
<div class="a" style="left:2px;top:1025px;font-size:12px;letter-spacing:-0.2px">Select an entity</div>
<div class="a" style="left:1635px;top:1025px;font-size:12px;letter-spacing:-0.2px">Editing Part</div>
<div class="a" style="left:1813px;top:1025px;font-size:12px;color:#a0a0a0;letter-spacing:-0.2px">MMGS</div>
<svg class="a" style="left:1866px;top:1028px" width="10" height="8"><path d="M1,6 h8 l-4,-4z" fill="#888"/></svg>
<svg class="a" style="left:1899px;top:1024px" width="20" height="16"><path d="M2,8 L10,3 L17,7 L17,10 L9,15 L2,11 Z" fill="#fff" stroke="#333" stroke-width="1.1"/><path d="M2,8 L9,12 L17,7 M9,12 V15" fill="none" stroke="#333" stroke-width="1"/><rect x="7" y="6" width="5" height="3" fill="none" stroke="#333" stroke-width="0.9" transform="rotate(-28 9 7)"/></svg>

</body></html>
